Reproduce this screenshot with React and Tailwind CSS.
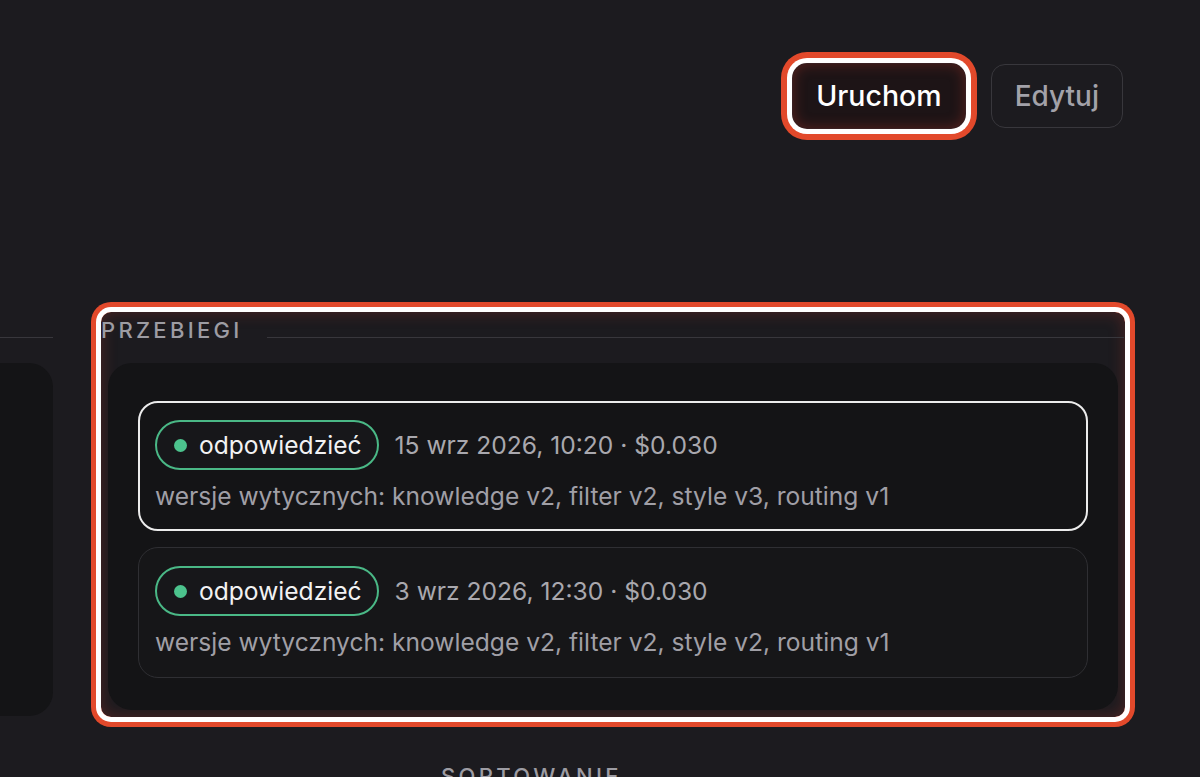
const RUNS = [
  {
    id: 1,
    date: '15 wrz 2026, 10:20',
    cost: '$0.030',
    versions: 'knowledge v2, filter v2, style v3, routing v1',
    active: true,
  },
  {
    id: 2,
    date: '3 wrz 2026, 12:30',
    cost: '$0.030',
    versions: 'knowledge v2, filter v2, style v2, routing v1',
    active: false,
  },
];

function SectionLabel({ children }) {
  return (
    <div className="flex items-center gap-[24px] h-[28px]">
      <span className="text-[22px] leading-[28px] tracking-[0.15em] uppercase text-[#9d9ca3] font-medium whitespace-nowrap">
        {children}
      </span>
      <div className="flex-1 h-px bg-[#38373c] mt-[14px]" />
    </div>
  );
}

function RunCard({ run }) {
  return (
    <div
      className={`rounded-[20px] ${
        run.active
          ? 'border-2 border-[#ececec] bg-[#141416] px-[15px] pt-[17px] pb-[17px]'
          : 'border border-[#2f2f33] bg-[#161618] px-[16px] pt-[18px] pb-[19px]'
      }`}
    >
      <div className="flex items-center gap-[16px]">
        <span className="flex items-center h-[50px] rounded-full border-2 border-[#4ab886] pl-[17px] pr-[15px] gap-[12px] bg-[#17171a]">
          <span className="w-[13px] h-[13px] rounded-full bg-[#4cc38d]" />
          <span className="text-[24.6px] text-[#f2f2f3]">odpowiedzieć</span>
        </span>
        <span className="text-[24.6px] text-[#a9a8ae]">
          {run.date} · {run.cost}
        </span>
      </div>
      <div className="mt-[10px] text-[24.6px] leading-[32px] text-[#a09fa6]">
        wersje wytycznych: {run.versions}
      </div>
    </div>
  );
}

export default function App() {
  return (
    <div className="min-h-screen h-[777px] overflow-hidden bg-[#1c1b1f] font-['Inter','Noto_Sans',sans-serif]">
      {/* Header actions */}
      <div className="flex justify-end items-center gap-[26px] pt-[64px] pr-[77px]">
        <button className="h-[64px] px-[23px] rounded-[14px] bg-[#1d1416] text-white text-[28.5px] font-medium shadow-[inset_0_0_14px_rgba(200,60,45,0.35),0_0_0_1px_#3a2022,0_0_0_6px_#ffffff,0_0_0_12px_#e2492b]">
          Uruchom
        </button>
        <button className="h-[64px] px-[23px] rounded-[14px] border border-[#38373c] text-[#a3a2a9] text-[28px] font-medium">
          Edytuj
        </button>
      </div>

      {/* Columns */}
      <div className="flex gap-[48px] mt-[184px]">
        {/* left column, mostly off-screen */}
        <div className="w-[300px] -ml-[247px] shrink-0 pt-[4px]">
          <div className="h-[28px] flex items-center">
            <div className="flex-1 h-px bg-[#38373c] mt-[14px]" />
          </div>
          <div className="mt-[19px] h-[353px] rounded-[24px] bg-[#141416]" />
        </div>

        {/* Runs section */}
        <div className="relative w-[1024px] h-[405px] shrink-0 rounded-[10px] pt-[4px] shadow-[inset_0_0_16px_rgba(200,60,45,0.3),0_0_0_5px_#ffffff,0_0_0_10px_#e2492b]">
          <div className="pr-[1px]">
            <SectionLabel>Przebiegi</SectionLabel>
          </div>
          <div className="mx-[7px] mt-[19px] h-[347px] rounded-[24px] bg-[#141416] px-[30px] pt-[38px] flex flex-col gap-[16px]">
            {RUNS.map(r => (
              <RunCard key={r.id} run={r} />
            ))}
          </div>
        </div>
      </div>

      {/* Next section label */}
      <div className="pl-[441px] mt-[45px]">
        <span className="text-[22px] leading-[28px] tracking-[0.15em] uppercase text-[#9d9ca3] font-medium">
          Sortowanie
        </span>
      </div>
    </div>
  );
}
